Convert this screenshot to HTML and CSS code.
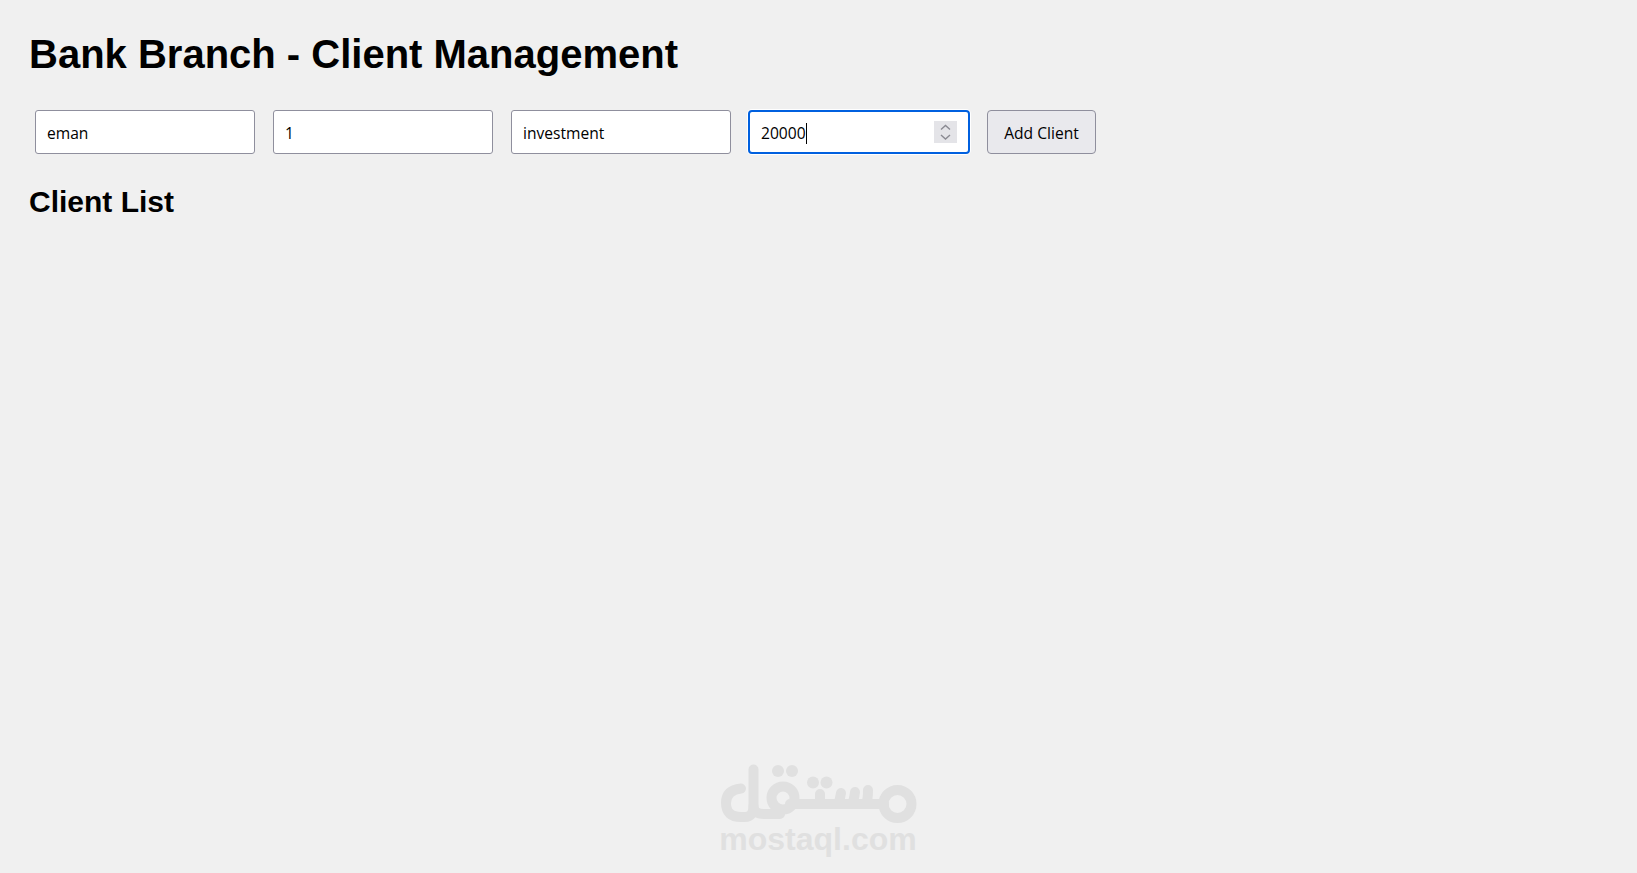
FILE: index.html
```html
<!DOCTYPE html>
<html lang="en">
<head>
<meta charset="utf-8">
<title>Bank Branch - Client Management</title>
<link rel="stylesheet" href="styles.css">
</head>
<body>
<main class="page">
  <h1 class="title">Bank Branch - Client Management</h1>
  <form class="client-form">
    <input class="field" type="text" value="eman">
    <input class="field" type="text" value="1">
    <input class="field" type="text" value="investment">
    <div class="field field-focus">
      <span class="field-value">20000</span><span class="caret"></span>
      <span class="spinner">
        <svg width="23" height="22" viewBox="0 0 23 22" aria-hidden="true">
          <path class="chev" d="M7 8.5 L11.5 4.5 L16 8.5"/>
          <path class="chev" d="M7 14 L11.5 18 L16 14"/>
        </svg>
      </span>
    </div>
    <button class="add-btn" type="button">Add Client</button>
  </form>
  <h2 class="subtitle">Client List</h2>
</main>
<div class="watermark">
  <svg class="wm-logo" width="200" height="64" viewBox="717 762 200 64" aria-hidden="true">
    <g class="wm-stroke">
      <path d="M741 788.500 Q726 790 726 803 Q726 817 741 817 H745 Q753.500 817 753.500 806 V769.500"/>
      <path d="M753.500 806 Q753.500 814 764 814 H780"/>
      <circle cx="783" cy="798" r="11.500"/>
      <path d="M790 804 H884"/>
      <path d="M820 804 V794"/>
      <path d="M838 804 Q840 800 841 793"/>
      <path d="M852 804 Q854 800 855 792"/>
      <path d="M866 804 Q868 800 868 790"/>
      <circle cx="897.500" cy="804" r="14"/>
    </g>
    <g class="wm-fill">
      <circle cx="778" cy="771" r="6"/>
      <circle cx="792" cy="771" r="6"/>
      <circle cx="813" cy="782.500" r="6"/>
      <circle cx="826.500" cy="782.500" r="6"/>
    </g>
  </svg>
  <div class="wm-text">mostaql.com</div>
</div>
</body>
</html>
```
FILE: styles.css
```css
* { box-sizing: border-box; }
html, body { margin: 0; height: 100%; }
body {
  background: #f0f0f0;
  font-family: "Liberation Sans", Arial, sans-serif;
  color: #000;
  overflow: hidden;
  position: relative;
}
.page { padding: 31px 29px 0; }
.title {
  margin: 0 0 33px;
  font-size: 40px;
  line-height: 46px;
  font-weight: 700;
}
.client-form {
  display: flex;
  align-items: stretch;
  gap: 18px;
  padding-left: 6px;
}
.field {
  width: 220px;
  height: 44px;
  padding: 2px 11px 0;
  background: #fff;
  border: 1px solid #8f8f9d;
  border-radius: 3px;
  font-family: "Open Sans", "Noto Sans", sans-serif;
  font-size: 15.6px;
  color: #000;
  outline: none;
}
.field-focus {
  display: flex;
  align-items: center;
  width: 222px;
  margin-left: -1px;
  margin-right: -1px;
  border: 2px solid #0060df;
  border-radius: 4px;
  padding: 0 11px;
  box-shadow: 0 0 0 1px #fff;
}
.field-value { padding-top: 2px; }
.caret {
  width: 1px;
  height: 21px;
  margin-top: 2px;
  background: #000;
}
.spinner {
  display: flex;
  margin-left: auto;
  background: #e4e4e8;
}
.chev {
  fill: none;
  stroke: #8a8a92;
  stroke-width: 1.4;
}
.add-btn {
  width: 109px;
  height: 44px;
  background: #e9e9ed;
  border: 1px solid #8f8f9d;
  border-radius: 4px;
  font-family: "Open Sans", "Noto Sans", sans-serif;
  font-size: 15.6px;
  color: #000;
  padding: 2px 0 0;
}
.subtitle {
  margin: 30px 0 0;
  font-size: 30px;
  line-height: 36px;
  font-weight: 700;
}
.watermark {
  position: absolute;
  left: 717px;
  top: 762px;
  width: 200px;
  display: flex;
  flex-direction: column;
  align-items: center;
}
.wm-logo { display: block; }
.wm-stroke { fill: none; stroke: #e0e0e0; stroke-width: 10; stroke-linecap: round; }
.wm-fill { fill: #e0e0e0; }
.wm-text {
  margin-top: -3px;
  margin-left: 2px;
  font-size: 32px;
  line-height: 32px;
  font-weight: 700;
  color: #e0e0e0;
  white-space: nowrap;
}
```
